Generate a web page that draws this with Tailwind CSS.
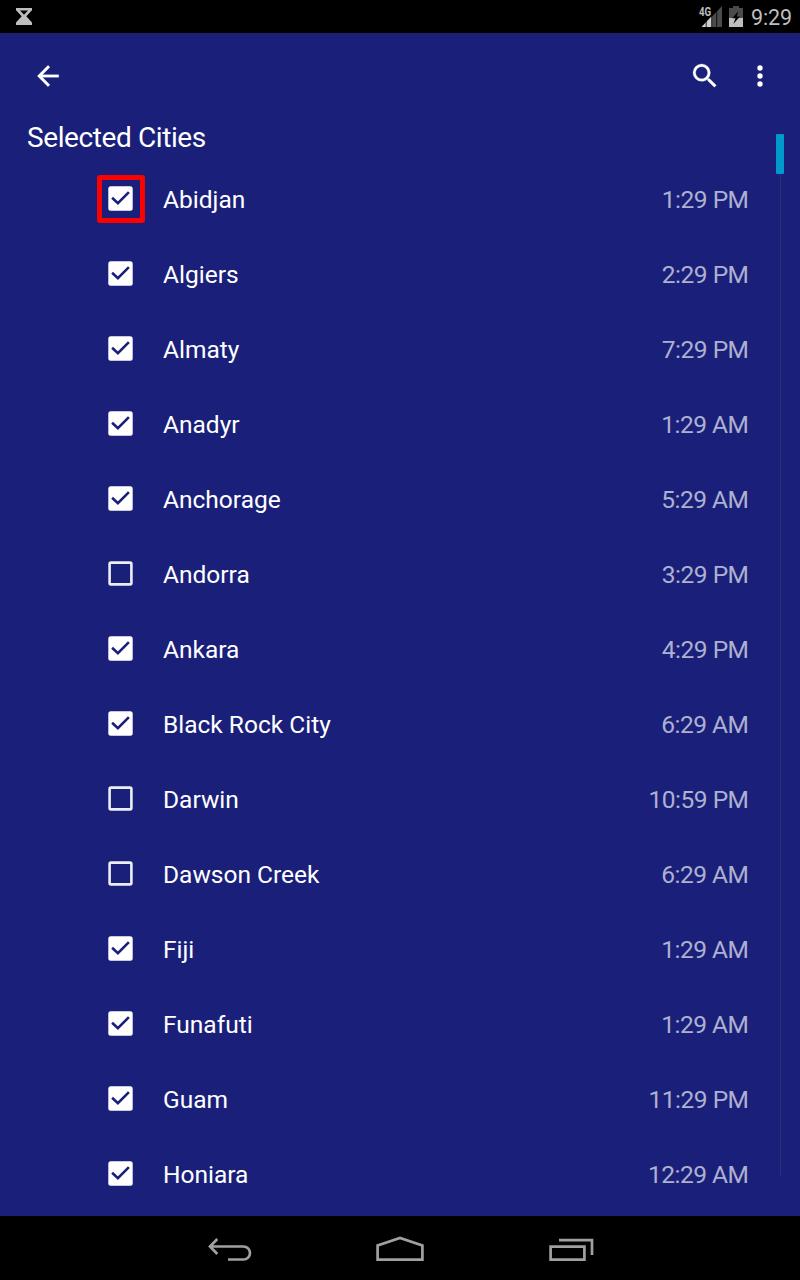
<!DOCTYPE html>
<html lang="en">
<head>
<meta charset="utf-8">
<title>Selected Cities</title>
<script src="https://cdn.jsdelivr.net/npm/@tailwindcss/browser@4"></script>
</head>
<body class="w-[800px] h-[1280px] overflow-hidden bg-[#1a207a] text-white font-['Roboto',sans-serif] flex flex-col">
<svg class="hidden">
  <symbol id="on" viewBox="0 0 25 25"><rect x=".3" y=".3" width="24.4" height="24.4" rx="2.5" fill="#fff"/><path d="M4.1 11.7 9.9 17.2 20.9 6.2" fill="none" stroke="#1a207a" stroke-width="2.6"/></symbol>
  <symbol id="off" viewBox="0 0 25 25"><rect x="1.6" y="1.6" width="21.8" height="21.8" rx="1.4" fill="none" stroke="#fff" stroke-opacity=".92" stroke-width="2.6"/></symbol>
</svg>
<header class="h-[33px] shrink-0 bg-black flex items-center justify-between pl-4 pr-2">
  <svg class="w-4 h-[17px]" viewBox="0 0 16 17"><path d="M0 0H16V2.2L10.3 8.2 16 14.4V17H0V14.4L5.7 8.2 0 2.2Z" fill="#bebebe"/><path d="M4 2.5H12L8 6.7Z" fill="#000"/></svg>
  <div class="flex items-center">
    <svg class="w-[24px] h-[24px] mb-[2px] overflow-visible" viewBox="0 -2 24 24">
      <path d="M23 0V21H3Z" fill="#4b4b4b"/><path d="M12.8 10V21H2.5Z" fill="#cfcfcf"/>
      <path d="M7.2 13V21M12.7 8V21M17.7 4V21" stroke="#000" stroke-width=".8"/>
      <path d="M0 0H12.5V10.5H0Z" fill="#000"/>
      <text x="0" y="9.6" font-family="Roboto" font-size="12.5" font-weight="700" textLength="12.2" lengthAdjust="spacingAndGlyphs" fill="#bebebe">4G</text>
    </svg>
    <svg class="w-[14px] h-[21px] ml-[6px]" viewBox="0 0 14 21"><path d="M4 0H10V2H14V21H0V2H4Z" fill="#4b4b4b"/><path d="M0 12H14V21H0Z" fill="#bebebe"/><path d="M9.5 5 3.2 12.2H6.5L4.3 18 11 10.5H7.7Z" fill="#000"/></svg>
    <span class="ml-2 text-[21.5px] leading-[33px] text-[#bebebe] tracking-[-0.1px] pt-px">9:29</span>
  </div>
</header>
<nav class="h-[84px] shrink-0 flex items-center justify-between pt-px pl-[32px] pr-[24px]">
  <svg class="size-8" viewBox="0 0 24 24" fill="#fff" stroke="#fff" stroke-width=".2"><path d="M20 11H7.83l5.59-5.59L12 4l-8 8 8 8 1.41-1.41L7.83 13H20v-2z"/></svg>
  <div class="flex items-center gap-[23px]">
    <svg class="size-8" viewBox="0 0 24 24" fill="#fff" stroke="#fff" stroke-width=".2"><path d="M15.5 14h-.79l-.28-.27A6.471 6.471 0 0 0 16 9.5 6.5 6.5 0 1 0 9.5 16c1.61 0 3.09-.59 4.23-1.57l.27.28v.79l5 4.99L20.49 19l-4.99-5zm-6 0C7.01 14 5 11.99 5 9.5S7.01 5 9.5 5 14 7.01 14 9.5 11.99 14 9.5 14z"/></svg>
    <svg class="size-8" viewBox="0 0 24 24" fill="#fff"><circle cx="12" cy="6" r="2"/><circle cx="12" cy="12" r="2"/><circle cx="12" cy="18" r="2"/></svg>
  </div>
</nav>
<main class="h-[1099px] shrink-0 relative overflow-hidden">
  <h1 class="h-[45px] pl-[27px] text-[28px] leading-[41px] tracking-[-0.4px]">Selected Cities</h1>
  <ul id="cities"></ul>
  <div class="absolute left-[780px] top-[57px] w-px h-[1002px] bg-[#2b3078]"></div>
  <div class="absolute left-[776px] top-[17px] w-2 h-10 rounded-[1px] bg-[#0099cc]"></div>
  <div class="absolute left-[97px] top-[58px] size-12 border-[5px] border-[#ff0000] rounded-[3px]"></div>
</main>
<footer class="h-16 shrink-0 bg-black flex items-center pl-[208px] text-[#a0a0a0]">
  <svg class="w-11 h-16" viewBox="0 0 44 64" fill="none" stroke="currentColor" stroke-width="2.7"><path d="M2 30.5H35.5A6.5 6.5 0 0 1 35.5 43.5H20M9.3 23 2 30.5 9.3 38"/></svg>
  <svg class="w-[48px] h-16 ml-[124px]" viewBox="0 0 48 64" fill="none" stroke="currentColor" stroke-width="2.7"><path d="M1.6 43.7V29.5L24 22 46.4 29.5V43.7Z"/></svg>
  <svg class="w-[46px] h-16 ml-[125px]" viewBox="0 0 46 64" fill="none" stroke="currentColor" stroke-width="2.7"><path d="M1.6 30.6H35.4V43.6H1.6ZM10 24.2H43V39"/></svg>
</footer>
<script>
const cities = [["Abidjan","1:29 PM",1],["Algiers","2:29 PM",1],["Almaty","7:29 PM",1],["Anadyr","1:29 AM",1],["Anchorage","5:29 AM",1],["Andorra","3:29 PM",0],["Ankara","4:29 PM",1],["Black Rock City","6:29 AM",1],["Darwin","10:59 PM",0],["Dawson Creek","6:29 AM",0],["Fiji","1:29 AM",1],["Funafuti","1:29 AM",1],["Guam","11:29 PM",1],["Honiara","12:29 AM",1]];
document.getElementById("cities").innerHTML = cities.map(([name, time, on]) =>
  `<li class="h-[75px] flex items-center pl-[108px] pr-[51.5px] text-2xl leading-8">
    <svg class="size-[25px] mb-[2px]"><use href="#${on ? "on" : "off"}"/></svg>
    <span class="ml-[30px] text-[24.5px]">${name}</span><span class="ml-auto text-[24.5px] tracking-[-0.5px] text-[#aeb0d0]">${time}</span></li>`).join("");
</script>
</body>
</html>
